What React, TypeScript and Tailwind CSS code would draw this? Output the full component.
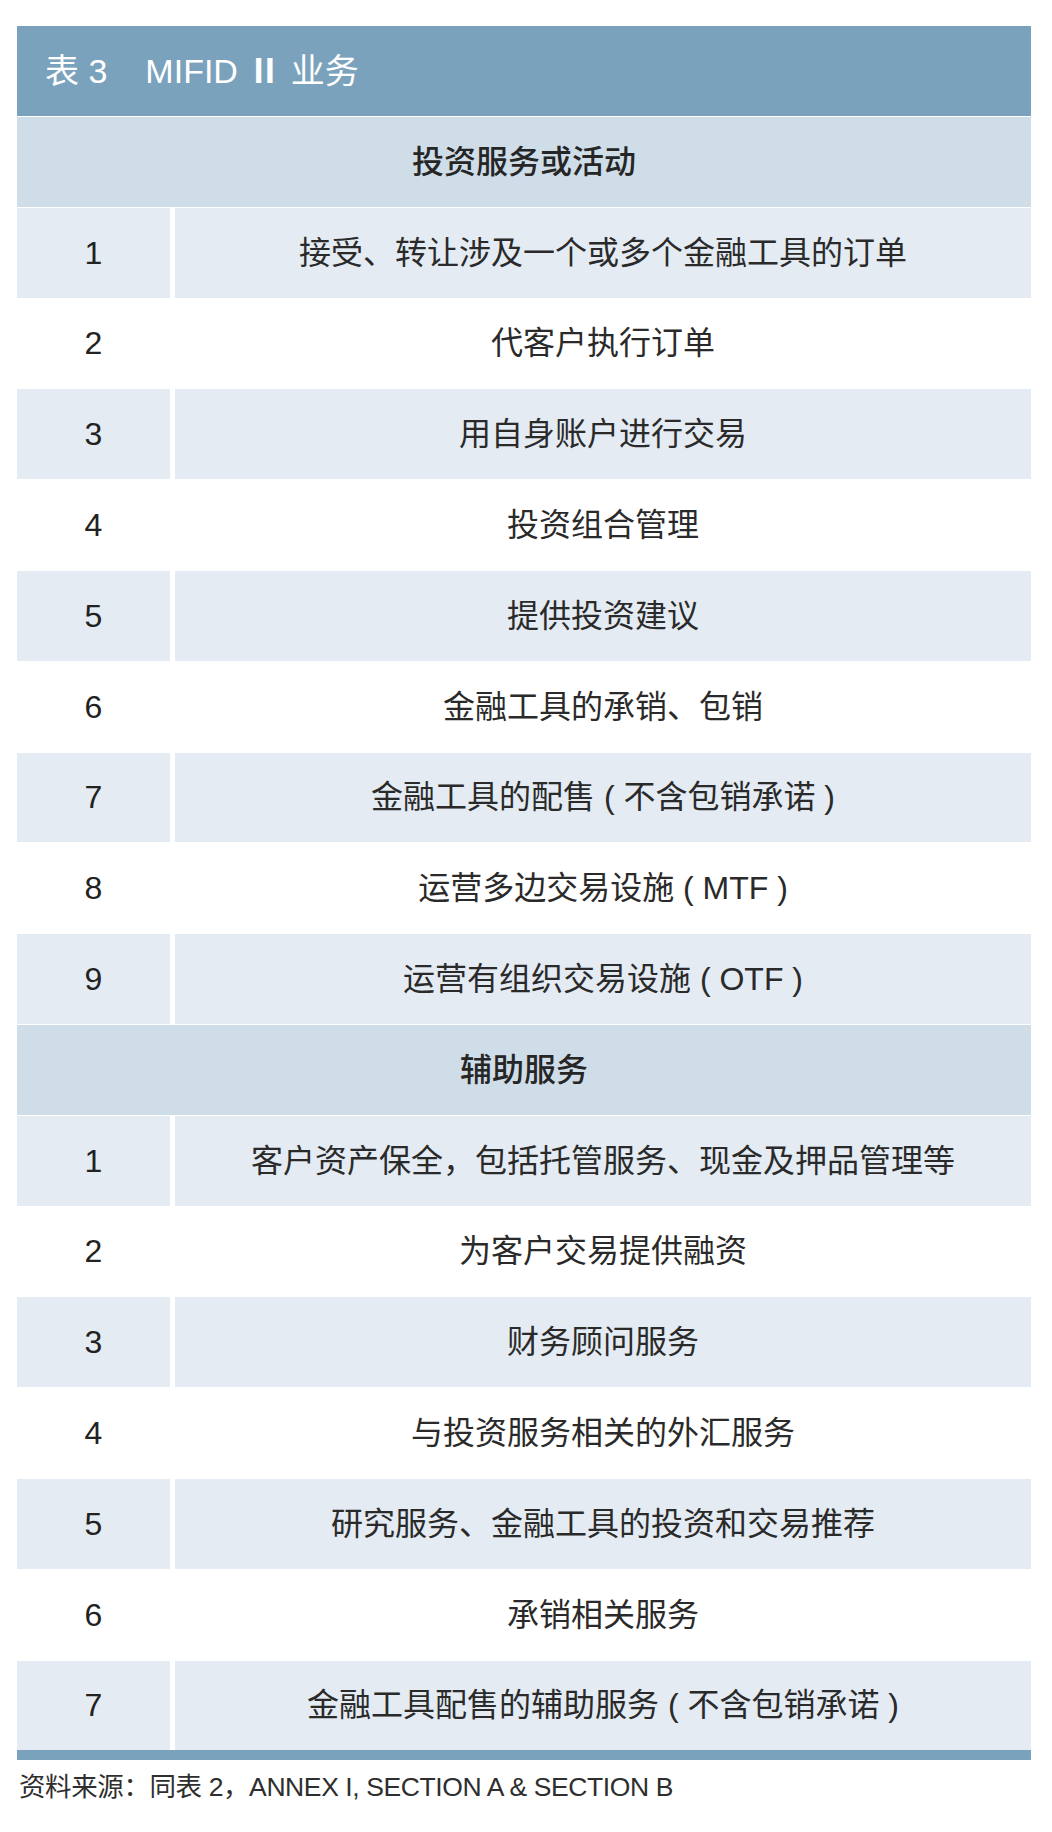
import React from "react";

const sectionA = [
  "接受、转让涉及一个或多个金融工具的订单",
  "代客户执行订单",
  "用自身账户进行交易",
  "投资组合管理",
  "提供投资建议",
  "金融工具的承销、包销",
  "金融工具的配售 ( 不含包销承诺 )",
  "运营多边交易设施 ( MTF )",
  "运营有组织交易设施 ( OTF )",
];

const sectionB = [
  "客户资产保全，包括托管服务、现金及押品管理等",
  "为客户交易提供融资",
  "财务顾问服务",
  "与投资服务相关的外汇服务",
  "研究服务、金融工具的投资和交易推荐",
  "承销相关服务",
  "金融工具配售的辅助服务 ( 不含包销承诺 )",
];

function SectionRow({ title }: { title: string }) {
  return (
    <div className="h-[89.8px] bg-[#cfdde8] flex items-center justify-center text-[32px] font-medium text-[#262626]">
      {title}
    </div>
  );
}

function ItemRow({ n, text }: { n: number; text: string }) {
  const shaded = n % 2 === 1;
  return (
    <div className={shaded ? "h-[89.8px] flex gap-[5px]" : "h-[89.8px] flex gap-[5px] bg-white"}>
      <div
        className={
          shaded
            ? "w-[153px] shrink-0 bg-[#e4ebf3] flex items-center justify-center text-[32px] text-[#222]"
            : "w-[153px] shrink-0 bg-white flex items-center justify-center text-[32px] text-[#222]"
        }
      >
        {n}
      </div>
      <div
        className={
          shaded
            ? "flex-1 bg-[#e4ebf3] flex items-center justify-center text-[32px] text-[#2a2a2a]"
            : "flex-1 bg-white flex items-center justify-center text-[32px] text-[#2a2a2a]"
        }
      >
        {text}
      </div>
    </div>
  );
}

export default function App() {
  return (
    <div className="w-[1052px] h-[1832px] bg-white font-['Liberation_Sans','Noto_Sans_CJK_SC',sans-serif] pt-[26px] pl-[17px] pr-[21px]">
      <div className="flex flex-col gap-px">
        <div className="h-[90px] bg-[#7ba2bd] flex items-center pl-[28px] text-[34px] text-white">
          <span>表 3</span>
          <span className="ml-[38px]">
            MIFID <span className="font-bold">Ⅱ</span> 业务
          </span>
        </div>
        <SectionRow title="投资服务或活动" />
        {sectionA.map((t, i) => (
          <ItemRow key={"a" + i} n={i + 1} text={t} />
        ))}
        <SectionRow title="辅助服务" />
        {sectionB.map((t, i) => (
          <ItemRow key={"b" + i} n={i + 1} text={t} />
        ))}
      </div>
      <div className="h-[10px] bg-[#7ba2bd]" />
      <p className="mt-[12px] pl-[2px] text-[26.5px] leading-[30px] tracking-[-0.4px] text-[#2e2e2e]">
        资料来源：同表 2，ANNEX I, SECTION A &amp; SECTION B
      </p>
    </div>
  );
}
